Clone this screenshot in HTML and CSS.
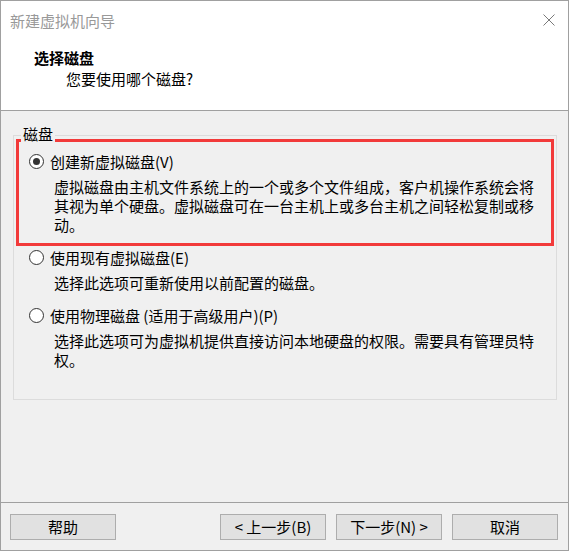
FILE: index.html
```
<!DOCTYPE html>
<html lang="zh-CN">
<head>
<meta charset="utf-8">
<title>新建虚拟机向导</title>
<link rel="stylesheet" href="styles.css">
</head>
<body>
<div class="window">
  <div class="titlebar">
    <span class="title">新建虚拟机向导</span>
    <svg class="close" width="12" height="12" viewBox="0 0 12 12"><path d="M0.5 0.5L11.5 11.5M11.5 0.5L0.5 11.5" stroke="#7a7a7a" stroke-width="1" fill="none"/></svg>
  </div>
  <div class="header">
    <div class="h-title">选择磁盘</div>
    <div class="h-sub">您要使用哪个磁盘?</div>
  </div>
  <div class="content">
    <div class="group">
      <span class="group-title">磁盘</span>
      <div class="highlight">
        <label class="opt-row"><input type="radio" name="disk" class="radio" checked>创建新虚拟磁盘(V)</label>
        <div class="desc">虚拟磁盘由主机文件系统上的一个或多个文件组成，客户机操作系统会将<br>其视为单个硬盘。虚拟磁盘可在一台主机上或多台主机之间轻松复制或移<br>动。</div>
      </div>
      <div class="option opt-2">
        <label class="opt-row"><input type="radio" name="disk" class="radio">使用现有虚拟磁盘(E)</label>
        <div class="desc">选择此选项可重新使用以前配置的磁盘。</div>
      </div>
      <div class="option opt-3">
        <label class="opt-row"><input type="radio" name="disk" class="radio">使用物理磁盘 (适用于高级用户)(P)</label>
        <div class="desc">选择此选项可为虚拟机提供直接访问本地硬盘的权限。需要具有管理员特<br>权。</div>
      </div>
    </div>
  </div>
  <div class="footer">
    <button class="btn">帮助</button>
    <div class="spacer"></div>
    <button class="btn">&lt; 上一步(B)</button>
    <button class="btn">下一步(N) &gt;</button>
    <button class="btn">取消</button>
  </div>
</div>
</body>
</html>
```
FILE: styles.css
```
html, body {
  margin: 0;
  padding: 0;
  background: #ffffff;
}
body {
  font-family: "Noto Sans CJK SC", "Noto Sans", sans-serif;
  font-size: 15px;
  color: #000;
}
.window {
  width: 569px;
  height: 551px;
  box-sizing: border-box;
  border: 1px solid #a0a0a0;
  display: flex;
  flex-direction: column;
  background: #fff;
}
.titlebar {
  height: 38px;
  flex: none;
  display: flex;
  align-items: center;
  padding-left: 9px;
  padding-right: 13px;
}
.title {
  flex: 1;
  color: #999999;
  line-height: 19px;
}
.close {
  display: block;
}
.header {
  height: 72px;
  flex: none;
  box-sizing: border-box;
  border-bottom: 1px solid #a0a0a0;
  padding: 8px 0 0 33px;
  line-height: 21px;
}
.h-title {
  font-weight: bold;
}
.h-sub {
  margin-left: 32px;
}
.content {
  flex: 1;
  background: #f0f0f0;
  padding: 24px 11px 0 12px;
}
.group {
  position: relative;
  height: 265px;
  box-sizing: border-box;
  border: 1px solid #dcdcdc;
  padding-top: 3px;
}
.group-title {
  position: absolute;
  top: -12px;
  left: 7px;
  padding: 0 2px;
  line-height: 19px;
  background: #f0f0f0;
}
.highlight {
  margin: 0 2px;
  border: 3px solid #f23a3a;
  padding: 10px 0 9px 10px;
}
.option {
  padding-left: 15px;
}
.opt-2 {
  margin-top: 2px;
}
.opt-3 {
  margin-top: 14px;
}
.opt-row {
  display: flex;
  align-items: center;
  line-height: 19px;
  height: 19px;
}
.radio {
  appearance: none;
  -webkit-appearance: none;
  margin: 0 6px 0 0;
  width: 15px;
  height: 15px;
  box-sizing: border-box;
  border: 1px solid #333333;
  border-radius: 50%;
  background: #ffffff;
  position: relative;
  flex: none;
}
.radio:checked::after {
  content: "";
  position: absolute;
  left: 3px;
  top: 3px;
  width: 7px;
  height: 7px;
  border-radius: 50%;
  background: #333333;
}
.desc {
  margin-top: 6px;
  padding-left: 25px;
  line-height: 19px;
}
.footer {
  height: 48px;
  flex: none;
  box-sizing: border-box;
  background: #f0f0f0;
  border-top: 1px solid #a0a0a0;
  padding: 11px 10px 10px 9px;
  display: flex;
  gap: 10px;
}
.spacer {
  flex: 1;
}
.btn {
  width: 106px;
  height: 26px;
  box-sizing: border-box;
  background: #e1e1e1;
  border: 1px solid #adadad;
  font-family: "Noto Sans CJK SC", "Noto Sans", sans-serif;
  font-size: 15px;
  color: #000;
  padding: 0;
  line-height: 24px;
}
```
